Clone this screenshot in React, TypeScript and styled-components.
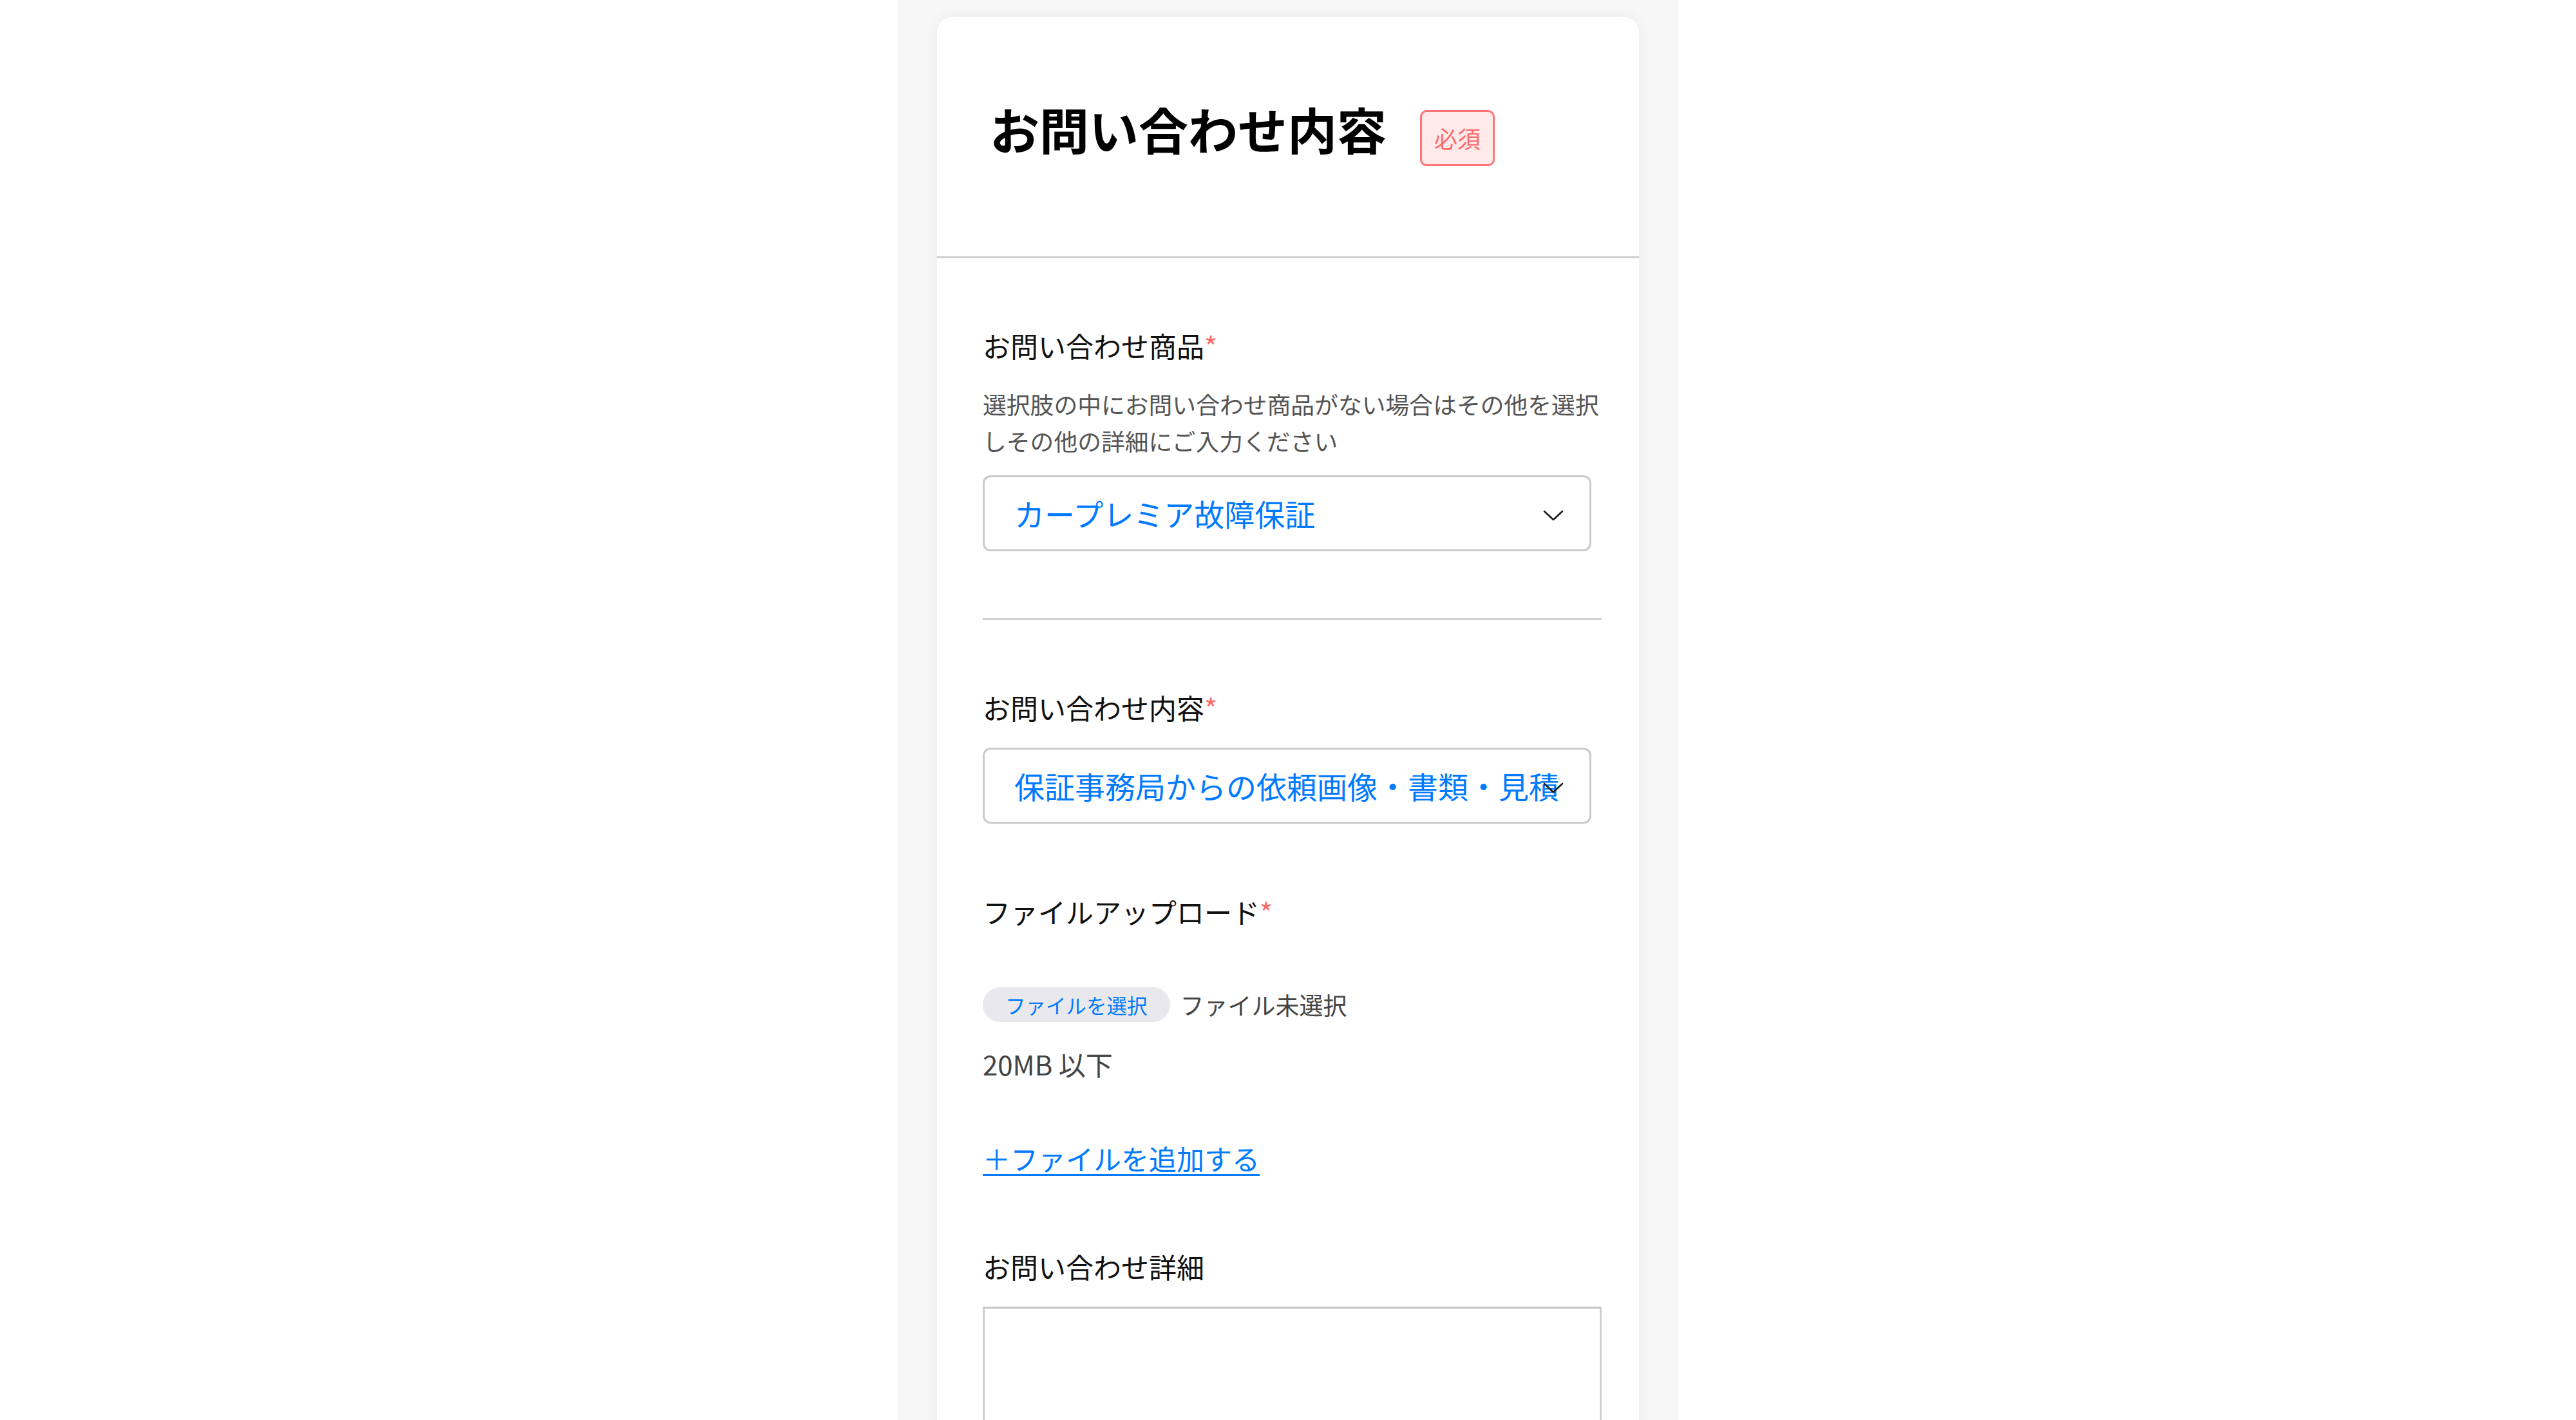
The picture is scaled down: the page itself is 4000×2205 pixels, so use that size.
import styled, { createGlobalStyle } from "styled-components";

const GlobalStyle = createGlobalStyle`
  body {
    margin: 0;
    background: #ffffff;
    font-family: "Noto Sans CJK JP", "Noto Sans", sans-serif;
    color: #111111;
  }
  * {
    box-sizing: border-box;
  }
`;

const Chevron = () => (
  <svg width="32" height="18" viewBox="0 0 32 18" fill="none">
    <path d="M2 2L16 15L30 2" stroke="#1a1a1a" strokeWidth="2.6" strokeLinecap="round" strokeLinejoin="round" />
  </svg>
);

const App = () => {
  return (
    <Page>
      <GlobalStyle />
      <Column>
        <Card>
          <Header>
            <Title>お問い合わせ内容</Title>
            <Badge>必須</Badge>
          </Header>
          <Form>
            <Label>
              お問い合わせ商品<Required>*</Required>
            </Label>
            <Note>選択肢の中にお問い合わせ商品がない場合はその他を選択しその他の詳細にご入力ください</Note>
            <SelectWrap>
              <Select defaultValue="car">
                <option value="car">カープレミア故障保証</option>
              </Select>
              <Arrow>
                <Chevron />
              </Arrow>
            </SelectWrap>

            <Divider />

            <Label>
              お問い合わせ内容<Required>*</Required>
            </Label>
            <SelectWrap $gap={31}>
              <Select defaultValue="doc">
                <option value="doc">保証事務局からの依頼画像・書類・見積書の提出</option>
              </Select>
              <Arrow>
                <Chevron />
              </Arrow>
            </SelectWrap>

            <Label $top={104}>
              ファイルアップロード<Required>*</Required>
            </Label>
            <FileRow>
              <FileButton type="button">ファイルを選択</FileButton>
              <FileStatus>ファイル未選択</FileStatus>
            </FileRow>
            <SizeNote>20MB 以下</SizeNote>
            <AddLink href="#">＋ファイルを追加する</AddLink>

            <Label $top={104}>お問い合わせ詳細</Label>
            <Detail />
          </Form>
        </Card>
      </Column>
    </Page>
  );
};

export default App;

const Page = styled.div`
  min-height: 100vh;
  background: #ffffff;
`;

const Column = styled.div`
  width: 1212px;
  min-height: 100vh;
  margin: 0 auto;
  padding: 26px 61px 0;
  background: #f7f7f7;
`;

const Card = styled.div`
  background: #ffffff;
  border-radius: 24px 24px 0 0;
  box-shadow: 0 0 22px rgba(0, 0, 0, 0.06);
`;

const Header = styled.div`
  display: flex;
  align-items: flex-end;
  gap: 52px;
  padding: 116px 82px 140px;
  border-bottom: 3px solid #cfcfcf;
`;

const Title = styled.h1`
  margin: 0;
  font-size: 77px;
  line-height: 1.5;
  font-weight: 700;
  color: #000000;
`;

const Badge = styled.span`
  display: flex;
  align-items: center;
  justify-content: center;
  height: 87px;
  padding: 0 19px;
  border: 3px solid #ff7474;
  border-radius: 10px;
  background: #ffe9e9;
  color: #ff6b6b;
  font-size: 36px;
  line-height: 1;
`;

const Form = styled.div`
  display: flex;
  flex-direction: column;
  align-items: flex-start;
  padding: 103px 58px 0 71px;
`;

const Label = styled.div<{ $top?: number }>`
  margin-top: ${(p) => p.$top ?? 0}px;
  font-size: 43px;
  line-height: 64px;
  color: #111111;
`;

const Required = styled.span`
  color: #ff6b6b;
`;

const Note = styled.p`
  width: 100%;
  margin: 31px 0 0;
  font-size: 36.8px;
  line-height: 57px;
  color: #555555;
`;

const SelectWrap = styled.div<{ $gap?: number }>`
  position: relative;
  width: 945px;
  margin-top: ${(p) => p.$gap ?? 25}px;
`;

const Select = styled.select`
  appearance: none;
  display: block;
  width: 100%;
  height: 118px;
  padding: 0 46px;
  border: 3px solid #cacaca;
  border-radius: 12px;
  background: #ffffff;
  color: #007aff;
  font-family: "Noto Sans CJK JP", "Noto Sans", sans-serif;
  font-size: 47px;
  outline: none;
`;

const Arrow = styled.span`
  position: absolute;
  right: 43px;
  top: calc(50% + 4px);
  transform: translateY(-50%);
  display: flex;
  pointer-events: none;
`;

const Divider = styled.hr`
  width: 100%;
  margin: 104px 0 103px;
  border: none;
  border-top: 3px solid #cfcfcf;
`;

const FileRow = styled.div`
  display: flex;
  align-items: center;
  gap: 16px;
  margin-top: 86px;
`;

const FileButton = styled.button`
  height: 54px;
  padding: 0 35px;
  border: none;
  border-radius: 27px;
  background: #e9e9ed;
  color: #007aff;
  font-family: "Noto Sans CJK JP", "Noto Sans", sans-serif;
  font-size: 31.5px;
  line-height: 54px;
`;

const FileStatus = styled.span`
  font-size: 37px;
  color: #444444;
`;

const SizeNote = styled.div`
  margin-top: 34px;
  font-size: 42px;
  line-height: 62px;
  color: #444444;
`;

const AddLink = styled.a`
  margin-top: 83px;
  font-size: 43px;
  line-height: 64px;
  color: #007aff;
  text-decoration: underline;
  text-underline-offset: 6px;
  text-decoration-thickness: 3px;
`;

const Detail = styled.textarea`
  width: 100%;
  height: 420px;
  margin-top: 31px;
  border: 3px solid #cdcdcd;
  border-top-color: #c4c4c4;
  border-radius: 0;
  resize: none;
  outline: none;
`;
